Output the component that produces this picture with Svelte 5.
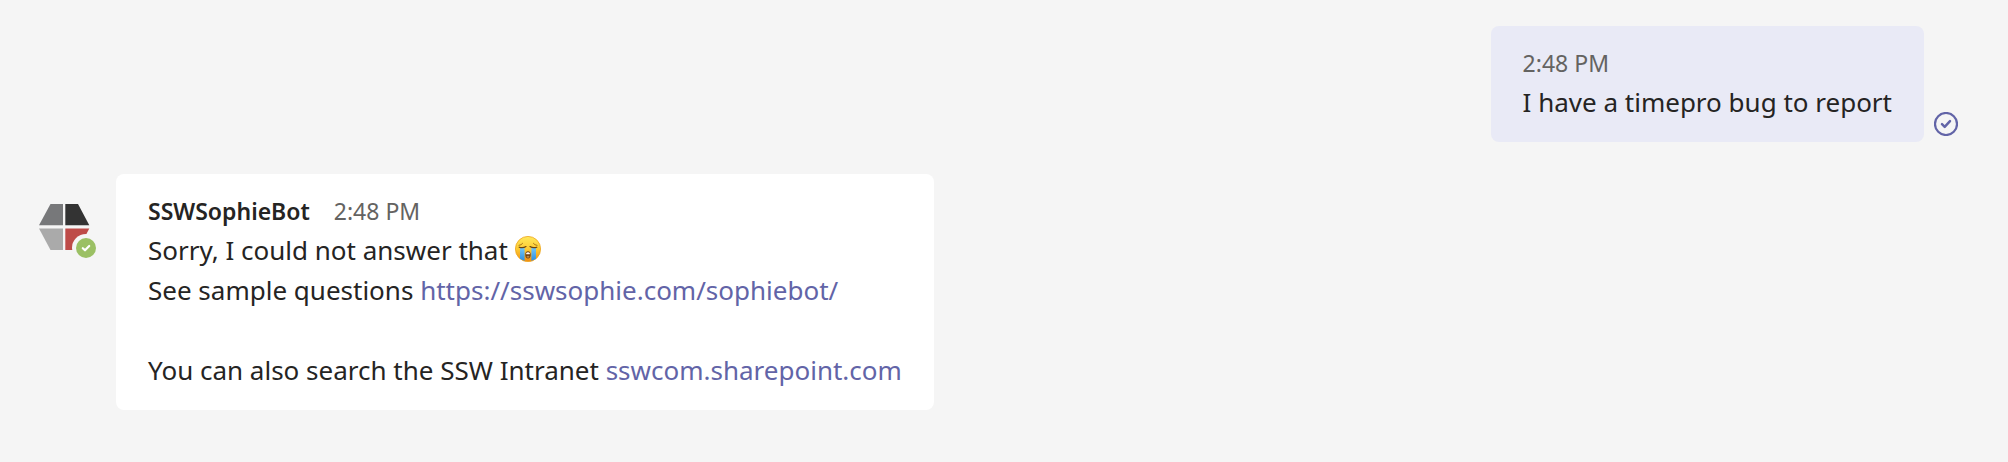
<script>
  const time = '2:48 PM';
</script>

<main class="chat">
  <article class="row sent">
    <div class="bubble">
      <header><time>{time}</time></header>
      <p>I have a timepro bug to report</p>
    </div>
    <svg class="receipt" viewBox="0 0 24 24" role="img" aria-label="Sent">
      <circle cx="12" cy="12" r="11" fill="none" stroke="#6264a7" stroke-width="2.2" />
      <path d="M8 12.2 10.7 14.8 16 9.2" fill="none" stroke="#6264a7" stroke-width="2.5" stroke-linecap="round" stroke-linejoin="round" />
    </svg>
  </article>

  <article class="row received">
    <svg class="avatar" viewBox="0 0 64 64" role="img" aria-label="SSWSophieBot, available">
      <path d="M18.5 12H31V33.3H7Z" fill="#77787a" />
      <path d="M33.3 12H46L57.3 33.3H33.3Z" fill="#333" />
      <path d="M7 36.5H31V58H18.5Z" fill="#aaa" />
      <path d="M33.3 36.5H57.3L46 58H33.3Z" fill="#be4b48" />
      <circle cx="54" cy="56" r="14" fill="#f5f5f5" />
      <circle cx="54" cy="56" r="10" fill="#9bc064" />
      <path d="M50.8 56.2 53 58.3 57.2 54" fill="none" stroke="#fff" stroke-width="2.2" stroke-linecap="round" stroke-linejoin="round" />
    </svg>
    <div class="bubble">
      <header><strong>SSWSophieBot</strong><time>{time}</time></header>
      <p>
        Sorry, I could not answer that
        <svg class="emoji" viewBox="0 0 26 26" role="img" aria-label="Loudly crying face">
          <defs>
            <linearGradient id="face" x1="0" y1="0" x2="0" y2="1">
              <stop offset="0" stop-color="#ffe95c" />
              <stop offset=".5" stop-color="#fdcb33" />
              <stop offset="1" stop-color="#f08c10" />
            </linearGradient>
            <linearGradient id="tears" x1="0" y1="0" x2="0" y2="1">
              <stop offset="0" stop-color="#75c8f7" />
              <stop offset="1" stop-color="#2d8de0" />
            </linearGradient>
            <clipPath id="round"><circle cx="13" cy="13" r="13" /></clipPath>
          </defs>
          <circle cx="13" cy="13" r="12.6" fill="url(#face)" stroke="#eda51c" stroke-width=".8" />
          <g clip-path="url(#round)">
            <path d="M5 11.6Q7.5 12.6 9.6 11.6V24.8L5 23Z" fill="url(#tears)" />
            <path d="M21 11.6Q18.5 12.6 16.4 11.6V24.8L21 23Z" fill="url(#tears)" />
          </g>
          <path d="M4 9.4Q6.3 9.2 7.6 7.4M22 9.4Q19.7 9.2 18.4 7.4" fill="none" stroke="#a36b14" stroke-width=".9" stroke-linecap="round" />
          <path d="M4.2 11.2Q8 12.4 11 10.6M21.8 11.2Q18 12.4 15 10.6" fill="none" stroke="#6b4310" stroke-width="1.2" stroke-linecap="round" />
          <ellipse cx="13" cy="18.8" rx="2.7" ry="3.6" fill="#71400f" />
          <path d="M11.2 16.9Q13 15.4 14.8 16.9V18.2H11.2Z" fill="#fff" />
          <ellipse cx="13" cy="20.8" rx="1.5" ry="1" fill="#b5854d" />
        </svg>
      </p>
      <p>See sample questions <a href="https://sswsophie.com/sophiebot/">https://sswsophie.com/sophiebot/</a></p>
      <p class="later">You can also search the SSW Intranet <a href="https://sswcom.sharepoint.com">sswcom.sharepoint.com</a></p>
    </div>
  </article>
</main>

<style>
  :global(body) {
    margin: 0;
    background: #f5f5f5;
  }
  .chat {
    display: flex;
    flex-direction: column;
    gap: 32px;
    padding: 26px 50px 52px 32px;
    color: #252423;
    font: 26px/40px "Noto Sans", "Segoe UI", sans-serif;
  }
  .row {
    display: flex;
  }
  .sent {
    justify-content: flex-end;
    align-items: flex-end;
    gap: 10px;
  }
  .received {
    align-items: flex-start;
    gap: 20px;
  }
  .bubble {
    padding: 20px 32px;
    border-radius: 8px;
    background: #fff;
  }
  .sent .bubble {
    background: #e9eaf6;
  }
  header {
    display: flex;
    gap: 24px;
    padding-bottom: 2px;
    font-size: 23px;
    line-height: 34px;
  }
  strong {
    font-weight: 600;
  }
  time {
    color: #646361;
  }
  p {
    margin: 0;
  }
  .later {
    margin-top: 40px;
  }
  a {
    color: #6264a7;
    text-decoration: none;
  }
  .receipt {
    flex: none;
    width: 24px;
    height: 24px;
    margin-bottom: 6px;
  }
  .avatar {
    flex: none;
    width: 64px;
    height: 64px;
    margin-top: 18px;
    overflow: visible;
  }
  .emoji {
    width: 26px;
    height: 26px;
    vertical-align: -2px;
  }
</style>
